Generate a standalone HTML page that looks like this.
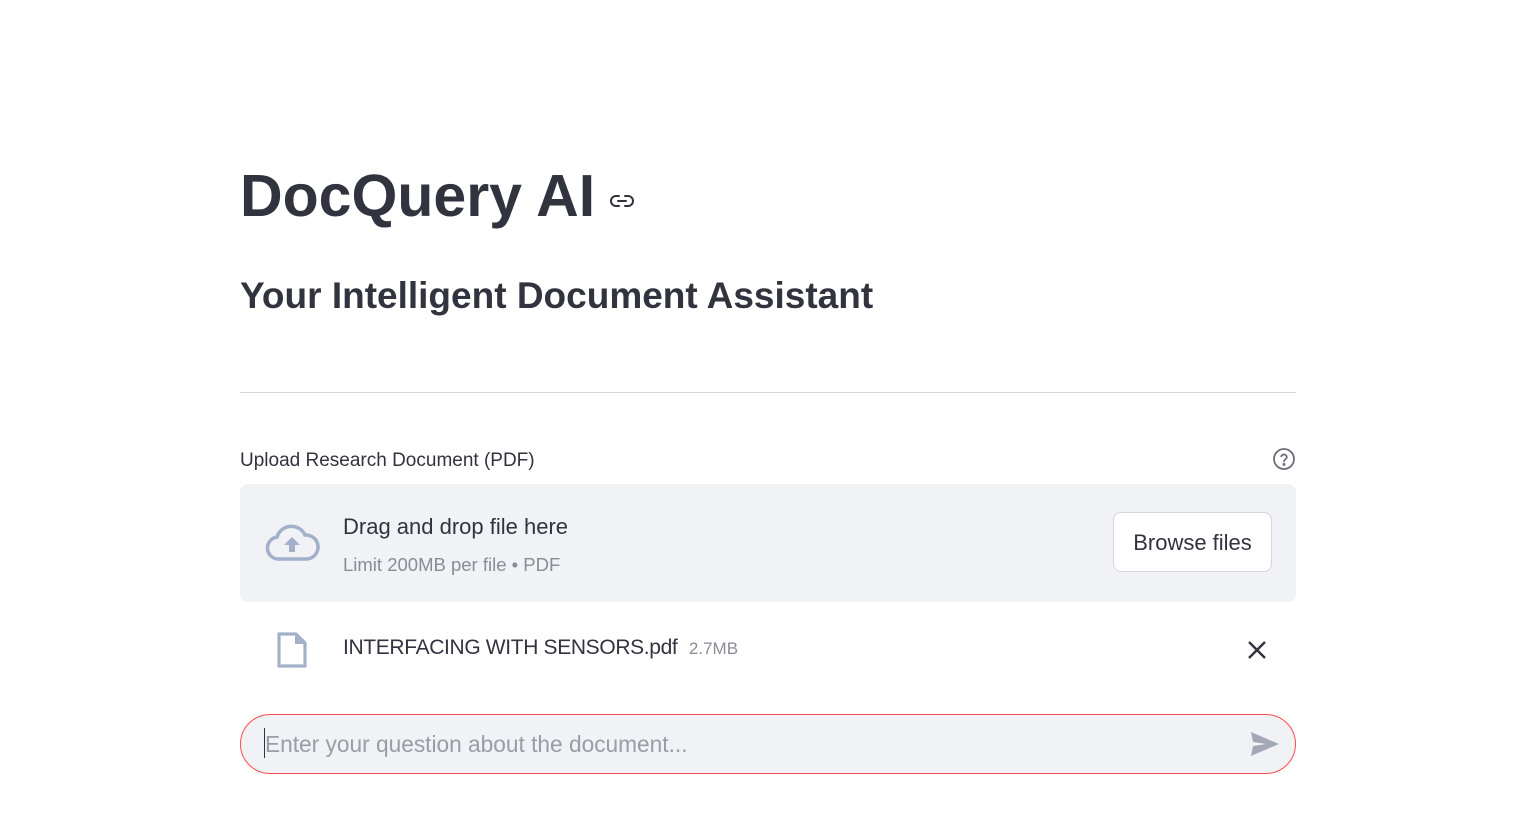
<!DOCTYPE html>
<html><head><meta charset="utf-8"><style>
body{margin:0;background:#fff;font-family:"Liberation Sans",sans-serif;color:#31333f;width:1522px;height:834px;overflow:hidden;position:relative}
.a{position:absolute;white-space:nowrap}
</style></head><body>
<div class="a" style="left:240px;top:158px;font-size:59px;font-weight:bold;line-height:76px">DocQuery AI</div>
<svg class="a" style="left:610px;top:192px" width="24" height="18" viewBox="0 0 24 18" fill="none" stroke="#31333f" stroke-width="2" stroke-linecap="round"><path d="M9 4H6a5 5 0 0 0 0 10h3M15 4h3a5 5 0 0 1 0 10h-3M8 9h8"/></svg>
<div class="a" style="left:240px;top:273px;font-size:37px;font-weight:bold;line-height:46px">Your Intelligent Document Assistant</div>
<div class="a" style="left:240px;top:392px;width:1056px;height:1px;background:#d6d6d9"></div>
<div class="a" style="left:240px;top:450px;font-size:19px">Upload Research Document (PDF)</div>
<svg class="a" style="left:1272px;top:447px" width="24" height="24" viewBox="0 0 24 24" fill="none" stroke="#6b6d78" stroke-width="1.8"><circle cx="12" cy="12" r="10"/><path d="M9.2 9.3a2.9 2.9 0 0 1 5.6 1c0 1.9-2.8 2.4-2.8 4" stroke-linecap="round"/><circle cx="12" cy="17.4" r="0.6" fill="#6b6d78"/></svg>
<div class="a" style="left:240px;top:484px;width:1056px;height:118px;background:#f0f2f6;border-radius:8px"></div>
<svg class="a" style="left:264px;top:523px" width="56" height="40" viewBox="0 0 56 40"><path d="M14 36a11 11 0 0 1-1-21.9A15 15 0 0 1 41 12a11 11 0 0 1 2 24Z" fill="none" stroke="#a3b0c9" stroke-width="3.5"/><path d="M28 14l-8 8h5v7h6v-7h5Z" fill="#a3b0c9"/></svg>
<div class="a" style="left:343px;top:514px;font-size:22px">Drag and drop file here</div>
<div class="a" style="left:343px;top:554px;font-size:18.5px;color:#8a8c96">Limit 200MB per file • PDF</div>
<div class="a" style="left:1113px;top:512px;width:157px;height:58px;border:1px solid #d6d6d9;border-radius:8px;background:#fff;font-size:22px;line-height:60px;text-align:center">Browse files</div>
<svg class="a" style="left:276px;top:631px" width="32" height="38" viewBox="0 0 32 38"><path d="M3 3h17l9 9v23H3Z" fill="none" stroke="#a3b0c9" stroke-width="3.2" stroke-linejoin="round"/><path d="M19 2v11h11Z" fill="#a3b0c9"/></svg>
<div class="a" style="left:343px;top:636px;font-size:21px;letter-spacing:-0.35px">INTERFACING WITH SENSORS.pdf <span style="font-size:17px;color:#8a8c96;margin-left:6px;letter-spacing:0">2.7MB</span></div>
<svg class="a" style="left:1247px;top:640px" width="20" height="20" viewBox="0 0 20 20" stroke="#31333f" stroke-width="2.4"><path d="M2 2l16 16M18 2L2 18"/></svg>
<div class="a" style="left:240px;top:714px;width:1054px;height:58px;border:1px solid #ff4b4b;border-radius:30px;background:#f0f2f6"></div>
<div class="a" style="left:264px;top:728px;width:1px;height:30px;background:#31333f"></div>
<div class="a" style="left:265px;top:731px;font-size:22.7px;color:#9a9ca6">Enter your question about the document...</div>
<svg class="a" style="left:1250px;top:731px" width="30" height="26" viewBox="0 0 30 26"><path d="M1 1l28 12L1 25l2-10 13-2-13-2Z" fill="#a3a8b8"/></svg>
</body></html>
